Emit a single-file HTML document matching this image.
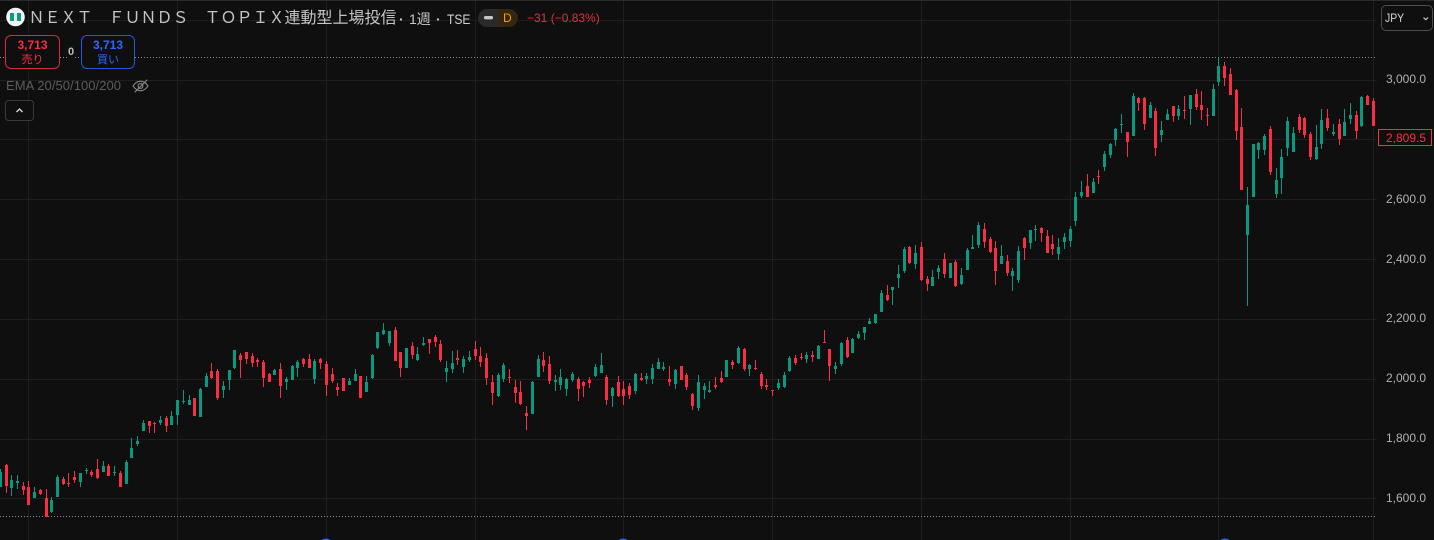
<!DOCTYPE html>
<html lang="ja"><head><meta charset="utf-8"><title>NEXT FUNDS TOPIX</title>
<style>
html,body{margin:0;padding:0;background:#0f0f0f;width:1434px;height:540px;overflow:hidden}
body{position:relative;font-family:"Liberation Sans","Noto Sans CJK JP",sans-serif}
.t{position:absolute;white-space:nowrap;line-height:1}
svg{position:absolute;left:0;top:0}
.p{position:absolute;left:1386px;font-size:12px;color:#b2b2b2;line-height:14px;white-space:nowrap}
.box{position:absolute;top:35px;height:32px;border-radius:6px;background:#0f0f0f;text-align:center;border:1px solid}
</style></head><body>
<svg width="1434" height="540" viewBox="0 0 1434 540">
<rect x="0" y="0" width="1434" height="1" fill="#2a2a2a"/>
<g shape-rendering="crispEdges" stroke="#1e1e1e" fill="none" stroke-width="1">
<path d="M0 20.5H1377M0 80.5H1377M0 139.5H1377M0 199.5H1377M0 259.5H1377M0 319.5H1377M0 379.5H1377M0 439.5H1377M0 498.5H1377"/>
<path d="M28.5 1V540M177.5 1V540M326.5 1V540M475.5 1V540M623.5 1V540M772.5 1V540M921.5 1V540M1070.5 1V540M1218.5 1V540M1373.5 1V540"/>
</g>
<g stroke="#8f8f8f" stroke-width="1" stroke-dasharray="1 2" fill="none" shape-rendering="crispEdges">
<path d="M0 57.5H1375M0 516.5H1375"/>
</g>
<g shape-rendering="crispEdges" fill="none">
<path stroke="#089981" stroke-width="1" d="M0.5 469V487M11.5 475V496M17.5 475V489M34.5 487V498M51.5 497V513M57.5 475V497M80.5 473V487M86.5 468V474M103.5 461V472M114.5 466V476M126.5 460V484M131.5 438V458M137.5 436V446M143.5 420V431M160.5 416V425M171.5 411V425M177.5 400V425M183.5 390V404M189.5 395V405M200.5 388V417M206.5 373V387M223.5 381V398M229.5 370V390M234.5 350V369M274.5 369V375M286.5 377V390M292.5 365V380M297.5 360V377M314.5 359V384M349.5 378V385M355.5 369V381M366.5 376V392M372.5 354V379M377.5 332V349M383.5 323V335M389.5 331V346M417.5 347V361M423.5 337V346M446.5 361V382M452.5 351V373M463.5 356V373M469.5 351V362M498.5 373V397M503.5 363V382M532.5 381V414M538.5 355V377M555.5 375V391M560.5 369V390M566.5 378V396M572.5 372V382M595.5 364V377M601.5 353V373M612.5 387V407M635.5 373V394M646.5 373V384M652.5 364V384M658.5 358V369M663.5 362V371M675.5 369V389M698.5 375V411M704.5 383V399M709.5 381V393M738.5 346V364M749.5 364V376M778.5 379V390M784.5 372V388M789.5 356V372M806.5 352V363M818.5 345V359M835.5 362V374M841.5 342V366M852.5 338V353M858.5 331V339M864.5 327V340M869.5 318V324M875.5 314V324M881.5 290V312M892.5 287V305M898.5 265V288M904.5 247V273M915.5 245V269M932.5 270V286M938.5 265V279M961.5 268V285M967.5 248V270M972.5 235V249M978.5 222V248M1001.5 245V264M1012.5 268V291M1018.5 246V283M1030.5 230V249M1035.5 225V241M1058.5 238V260M1064.5 233V249M1070.5 226V247M1075.5 192V226M1081.5 181V198M1093.5 178V193M1104.5 151V171M1110.5 143V158M1115.5 128V146M1121.5 114V133M1133.5 93V136M1150.5 102V118M1161.5 121V142M1167.5 109V120M1178.5 105V120M1190.5 95V125M1213.5 84V116M1218.5 57V86M1247.5 187V306M1258.5 142V159M1264.5 134V155M1276.5 168V198M1281.5 149V194M1287.5 117V156M1293.5 127V152M1316.5 125V160M1321.5 109V149M1333.5 124V136M1344.5 109V136M1350.5 103V124M1361.5 96V127"/>
<path stroke="#089981" stroke-width="3" d="M0.5 472V487M11.5 480V488M17.5 481V483M34.5 492V498M51.5 500V512M57.5 477V497M80.5 473V482M86.5 470V471M103.5 466V472M114.5 472V473M126.5 462V484M131.5 448V458M137.5 441V444M143.5 423V431M160.5 420V423M171.5 416V425M177.5 400V415M183.5 401V402M189.5 400V405M200.5 389V417M206.5 376V387M223.5 386V390M229.5 370V380M234.5 350V368M274.5 370V375M286.5 379V382M292.5 366V380M297.5 362V368M314.5 361V379M349.5 381V385M355.5 374V381M366.5 382V392M372.5 355V378M377.5 332V348M383.5 330V334M389.5 331V343M406.5 348V368M417.5 354V360M423.5 343V345M446.5 368V372M452.5 363V369M463.5 359V367M469.5 357V360M498.5 375V396M503.5 365V379M532.5 382V414M538.5 359V377M555.5 380V382M560.5 377V385M566.5 379V389M572.5 374V380M595.5 367V376M601.5 365V373M612.5 388V396M635.5 374V391M646.5 376V379M652.5 368V379M658.5 362V369M663.5 367V369M675.5 370V384M698.5 382V408M704.5 386V390M709.5 390V392M726.5 360V377M738.5 348V363M749.5 365V369M778.5 383V388M784.5 375V387M789.5 358V371M806.5 355V359M818.5 346V359M835.5 366V369M841.5 343V364M852.5 339V353M858.5 334V338M864.5 327V333M869.5 321V324M875.5 314V323M881.5 293V312M892.5 287V290M898.5 274V278M904.5 249V271M915.5 253V264M932.5 277V286M938.5 268V272M950.5 263V278M961.5 275V284M967.5 250V270M972.5 247V249M978.5 225V245M1001.5 256V264M1012.5 271V276M1018.5 251V280M1030.5 230V243M1035.5 229V230M1058.5 247V254M1064.5 237V242M1070.5 229V241M1075.5 197V221M1081.5 192V196M1093.5 182V193M1104.5 154V167M1110.5 144V155M1115.5 129V140M1121.5 124V125M1133.5 96V136M1150.5 105V118M1161.5 130V135M1167.5 114V120M1178.5 109V116M1190.5 95V109M1213.5 89V116M1218.5 66V82M1247.5 205V235M1253.5 144V197M1258.5 143V150M1264.5 136V150M1276.5 180V194M1281.5 157V178M1287.5 121V148M1293.5 133V152M1316.5 147V159M1321.5 120V144M1333.5 132V134M1344.5 122V136M1350.5 115V119M1361.5 97V126"/>
<path stroke="#f92e46" stroke-width="1" d="M6.5 464V493M23.5 482V495M28.5 481V505M40.5 489V495M46.5 489V517M63.5 477V485M68.5 473V487M74.5 471V483M91.5 470V477M97.5 459V479M108.5 464V476M120.5 471V487M149.5 421V433M154.5 422V433M166.5 416V432M211.5 363V379M217.5 369V400M240.5 353V378M246.5 352V364M252.5 353V367M257.5 358V367M263.5 360V387M269.5 373V382M280.5 363V398M303.5 358V367M309.5 354V368M320.5 358V369M326.5 361V396M332.5 368V383M337.5 383V396M395.5 327V361M400.5 352V377M412.5 342V359M429.5 339V354M435.5 335V347M440.5 340V362M457.5 350V365M475.5 341V360M480.5 347V367M486.5 353V385M492.5 375V405M509.5 369V383M515.5 380V403M520.5 381V405M526.5 406V430M543.5 352V372M549.5 356V384M578.5 377V401M583.5 381V397M589.5 377V388M606.5 375V405M618.5 376V397M623.5 381V405M629.5 383V399M641.5 373V381M669.5 366V386M686.5 373V390M692.5 393V410M715.5 377V389M721.5 371V383M732.5 360V369M744.5 348V371M755.5 360V370M761.5 372V389M766.5 379V390M772.5 390V396M795.5 355V365M801.5 353V360M812.5 351V362M824.5 330V343M829.5 349V381M847.5 337V358M887.5 285V301M909.5 246V264M921.5 242V281M927.5 276V291M944.5 253V278M955.5 260V287M984.5 223V248M990.5 237V253M995.5 241V285M1007.5 255V276M1024.5 237V260M1041.5 227V242M1047.5 230V253M1052.5 235V255M1087.5 174V197M1098.5 170V184M1127.5 132V157M1138.5 97V111M1144.5 97V130M1155.5 108V156M1173.5 106V122M1184.5 96V119M1196.5 89V110M1201.5 91V120M1207.5 108V126M1224.5 62V86M1230.5 68V95M1236.5 89V140M1241.5 108V190M1270.5 126V175M1299.5 114V133M1304.5 117V138M1310.5 132V160M1327.5 109V131M1339.5 119V145M1356.5 111V139M1367.5 95V105M1373.5 98V126"/>
<path stroke="#f92e46" stroke-width="3" d="M6.5 465V486M23.5 486V490M28.5 487V505M40.5 490V494M46.5 498V517M63.5 479V484M68.5 483V484M74.5 477V480M91.5 472V475M97.5 469V478M108.5 466V476M120.5 473V487M149.5 421V426M154.5 423V424M166.5 418V426M194.5 398V416M211.5 371V378M217.5 371V398M240.5 355V360M246.5 352V359M252.5 356V363M257.5 360V362M263.5 362V378M269.5 374V382M280.5 369V386M303.5 359V364M309.5 359V368M320.5 359V363M326.5 364V385M332.5 374V381M337.5 387V390M343.5 378V391M360.5 376V398M395.5 330V361M400.5 352V368M412.5 346V355M429.5 339V343M435.5 337V342M440.5 344V360M457.5 358V360M475.5 349V356M480.5 356V362M486.5 358V378M492.5 382V393M509.5 377V378M515.5 387V393M520.5 392V404M526.5 413V416M543.5 360V366M549.5 364V381M578.5 379V389M583.5 382V386M589.5 380V383M606.5 377V400M618.5 382V396M623.5 389V396M629.5 386V395M641.5 378V380M669.5 379V382M681.5 366V380M686.5 375V387M692.5 394V406M715.5 385V387M721.5 378V382M732.5 362V365M744.5 349V369M755.5 368V369M761.5 374V386M766.5 385V387M772.5 390V391M795.5 358V363M801.5 357V358M812.5 355V357M824.5 342V343M829.5 349V366M847.5 340V357M887.5 295V300M909.5 247V263M921.5 247V280M927.5 279V284M944.5 259V274M955.5 262V286M984.5 229V242M990.5 239V252M995.5 248V271M1007.5 261V273M1024.5 238V248M1041.5 228V233M1047.5 236V253M1052.5 244V249M1087.5 186V197M1098.5 176V177M1127.5 132V142M1138.5 98V103M1144.5 98V124M1155.5 111V148M1173.5 106V116M1184.5 110V111M1196.5 94V107M1201.5 105V110M1207.5 115V116M1224.5 66V78M1230.5 74V95M1236.5 90V131M1241.5 127V190M1270.5 129V172M1299.5 117V130M1304.5 118V135M1310.5 134V157M1327.5 118V128M1339.5 124V139M1356.5 115V131M1367.5 96V105M1373.5 101V126"/>
</g>
<g fill="#2962ff"><circle cx="326" cy="546" r="7.5"/><circle cx="623" cy="546" r="7.5"/><circle cx="1225" cy="546" r="7.5"/></g>
<!-- logo -->
<circle cx="15.5" cy="17" r="9.3" fill="#f4f4f4"/>
<rect x="10" y="13" width="4" height="8" fill="#0b9d7a"/><rect x="17" y="13" width="4" height="8" fill="#0b9d7a"/><rect x="14" y="13" width="3" height="8" fill="#dfeeea"/>
<!-- eye off -->
<g fill="none" stroke="#8c8c8c" stroke-width="1.1" stroke-linecap="round">
<path d="M133 86c2.2-3.2 4.8-4.8 7.5-4.8s5.3 1.6 7.5 4.8c-2.2 3.2-4.8 4.8-7.5 4.8s-5.3-1.6-7.5-4.8z"/>
<circle cx="140.5" cy="86" r="2.4"/>
<path d="M135 92L147 80"/>
</g>
<!-- collapse button -->
<rect x="5.5" y="100.5" width="28" height="20" rx="3" fill="#0f0f0f" stroke="#3a3a3a"/>
<path d="M16.5 112l3-3 3 3" fill="none" stroke="#e0e0e0" stroke-width="1.3"/>
<!-- badge -->
<path d="M498 9h-11a9 9 0 0 0 0 18h11z" fill="#2a2a2a"/>
<path d="M498 9h11a9 9 0 0 1 0 18h-11z" fill="#33270f"/>
<rect x="484" y="16" width="9" height="3.4" rx="1.5" fill="#c8c8c8"/>
<!-- JPY -->
<rect x="1381.5" y="5.5" width="51" height="25" rx="4.5" fill="#0f0f0f" stroke="#4e4e4e"/>
<path d="M1423.5 17.5l2.3 2.2 2.3-2.2" fill="none" stroke="#c8c8c8" stroke-width="1.2"/>
<rect x="1378.5" y="129.5" width="53" height="16" fill="#0f0f0f" stroke="#f92e46"/>
</svg>

<div class="t" style="left:28.5px;top:10px;font-size:16px;color:#c4c4c4;line-height:18px">ＮＥＸＴ　ＦＵＮＤＳ　ＴＯＰＩＸ連動型上場投信</div>
<div class="t" style="left:399px;top:10px;font-size:14px;color:#c8c8c8;line-height:18px;font-weight:bold">·</div>
<div class="t" style="left:409px;top:10px;font-size:14px;color:#c8c8c8;line-height:18px">1週</div>
<div class="t" style="left:436px;top:10px;font-size:14px;color:#c8c8c8;line-height:18px;font-weight:bold">·</div>
<div class="t" style="left:447px;top:10px;font-size:14px;color:#d0d0d0;line-height:18px;transform:scaleX(.86);transform-origin:left center">TSE</div>
<div class="t" style="left:503px;top:11px;font-size:12px;color:#ff9800;line-height:14px">D</div>
<div class="t" style="left:527px;top:11px;font-size:12px;color:#e0303f;line-height:14px">−31 (−0.83%)</div>

<div class="box" style="left:5px;width:53px;border-color:#d6283f;color:#f92e46">
<div style="font-size:12px;font-weight:bold;line-height:15px;margin-top:2px">3,713</div><div style="font-size:11px;line-height:13px;margin-top:1px">売り</div></div>
<div class="t" style="left:67px;top:47px;font-size:11px;font-weight:bold;color:#bdbdbd;background:#0f0f0f;padding:0 1px">0</div>
<div class="box" style="left:81px;width:52px;border-color:#2456e0;color:#2a68ff">
<div style="font-size:12px;font-weight:bold;line-height:15px;margin-top:2px">3,713</div><div style="font-size:11px;line-height:13px;margin-top:1px">買い</div></div>

<div class="t" style="left:6px;top:79px;font-size:13px;color:#5c5c5c;line-height:14px;letter-spacing:.05px">EMA 20/50/100/200</div>

<div class="t" style="left:1385px;top:11px;font-size:12px;color:#d8d8d8;line-height:14px;transform:scaleX(.87);transform-origin:left center">JPY</div>

<div class="p" style="top:72px">3,000.0</div>
<div class="p" style="top:131px;left:1386px;color:#f92e46">2,809.5</div>
<div class="p" style="top:192px">2,600.0</div>
<div class="p" style="top:252px">2,400.0</div>
<div class="p" style="top:311px">2,200.0</div>
<div class="p" style="top:371px">2,000.0</div>
<div class="p" style="top:431px">1,800.0</div>
<div class="p" style="top:491px">1,600.0</div>
</body></html>
